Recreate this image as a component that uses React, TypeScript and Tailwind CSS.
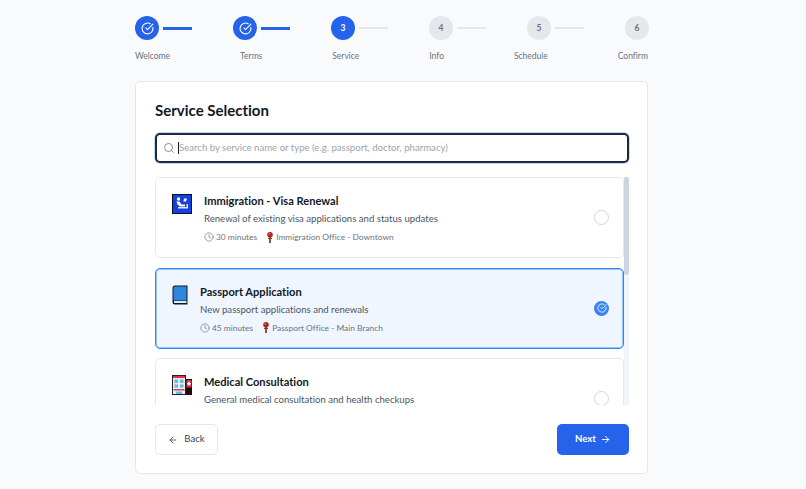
import React from 'react';
import { ArrowLeft, ArrowRight, CircleCheckBig, Clock, Search } from 'lucide-react';

const STEPS = ['Welcome', 'Terms', 'Service', 'Info', 'Schedule', 'Confirm'];
const CURRENT = 3;

function PinIcon() {
  return (
    <svg width="6" height="11" viewBox="0 0 6 11" className="flex-shrink-0">
      <rect x="2.2" y="4" width="1.6" height="7" fill="#6b2a22" />
      <rect x="1" y="6" width="4" height="1" fill="#8a3a2e" />
      <circle cx="3" cy="2.8" r="2.8" fill="#b3261e" />
      <circle cx="2.2" cy="2" r="0.7" fill="#e88a80" />
    </svg>
  );
}

function PassportControlIcon() {
  return (
    <svg width="20" height="20" viewBox="0 0 20 20" className="flex-shrink-0">
      <rect x="0.5" y="0.5" width="19" height="19" fill="#1440dd" stroke="#0b1020" />
      <circle cx="6.5" cy="5" r="1.7" fill="#fff" />
      <path d="M4.5 7.5 L7.5 7.5 L9.5 10.5 L13 10.5 L13 12.5 L8 12.5 L5.5 10.5 Z" fill="#fff" />
      <path d="M12 4.5 L15 4.5 L14 7.5 L11.5 7.5 Z" fill="#fff" />
      <path d="M6 14.5 L16 14.5 L16 10 L14.5 10 L14.5 13 L6 13 Z" fill="#dfe6ff" />
    </svg>
  );
}

function BookIcon() {
  return (
    <svg width="16" height="20" viewBox="0 0 16 20" className="flex-shrink-0">
      <path d="M3 .5 H15.5 V19.5 H3 Q.5 19.5 .5 17 V3 Q.5 .5 3 .5 Z" fill="#0f1a24" />
      <path d="M3 1.5 H14.5 V15.5 H1.5 V3 Q1.5 1.5 3 1.5 Z" fill="#2f86de" />
      <rect x="2" y="16" width="12.5" height="2" fill="#dcecf8" />
    </svg>
  );
}

function HospitalIcon() {
  return (
    <svg width="20" height="20" viewBox="0 0 20 20" className="flex-shrink-0">
      <rect x="0" y="0" width="14" height="20" fill="#20242c" />
      <rect x="1" y="1" width="12" height="18" fill="#f3e9ea" />
      <rect x="1" y="1" width="12" height="2" fill="#d8354a" />
      <rect x="2.5" y="4.5" width="3.5" height="3.5" fill="#5cbcea" />
      <rect x="8" y="4.5" width="3.5" height="3.5" fill="#5cbcea" />
      <rect x="2.5" y="9.5" width="3.5" height="3" fill="#5cbcea" />
      <rect x="8" y="9.5" width="3.5" height="3" fill="#5cbcea" />
      <rect x="1.5" y="14" width="11" height="1.5" fill="#c9485a" />
      <rect x="4" y="16.5" width="6" height="2.5" fill="#5cbcea" />
      <rect x="14" y="4" width="6" height="16" fill="#1c0b0e" />
      <rect x="14.5" y="5" width="5" height="7.5" fill="#d8354a" />
      <path d="M16.3 6.8 H17.7 V8 H18.9 V9.4 H17.7 V10.6 H16.3 V9.4 H15.1 V8 H16.3 Z" fill="#fff" />
    </svg>
  );
}

function Meta({ duration, place }: { duration: string; place: string }) {
  return (
    <div className="flex items-center text-[8.4px] leading-[14px] text-[#6b7280]">
      <Clock size={10} className="mr-[2px]" strokeWidth={1.6} />
      <span>{duration}</span>
      <span className="ml-[10px] mr-[3px]"><PinIcon /></span>
      <span>{place}</span>
    </div>
  );
}

function ServiceCard({ icon, title, desc, meta, selected }: {
  icon: React.ReactNode;
  title: string;
  desc: string;
  meta?: { duration: string; place: string };
  selected?: boolean;
}) {
  return (
    <div className={`flex justify-between h-[81px] flex-shrink-0 rounded-[5px] border pl-4 pr-[14px] ${selected ? 'bg-[#eff6ff] border-[#3b82f6] ring-1 ring-inset ring-[#93c5fd]' : 'bg-white border-[#e5e7eb]'}`}>
      <div className="flex items-start gap-3 pt-[15px]">
        <div className="pt-[1px]">{icon}</div>
        <div>
          <div className="text-[11.1px] leading-[16px] font-bold text-[#111827]">{title}</div>
          <div className="text-[9.6px] leading-[16px] mt-[2px] text-[#4b5563]">{desc}</div>
          {meta && <div className="mt-[3px]"><Meta {...meta} /></div>}
        </div>
      </div>
      <div className="self-center">
        {selected ? (
          <div className="w-[15px] h-[15px] rounded-full bg-[#3b82f6] flex items-center justify-center">
            <CircleCheckBig size={10} className="text-white" strokeWidth={2} />
          </div>
        ) : (
          <div className="w-[15px] h-[15px] rounded-full border-[1.5px] border-[#d1d5db]" />
        )}
      </div>
    </div>
  );
}

export default function App() {
  return (
    <div className="w-[806px] h-[489px] overflow-hidden bg-[#f9fafb] pt-4 pl-[135px] font-['Lato','Noto_Sans',sans-serif] [font-variant-ligatures:none]">
      <div className="w-[514px]">
        {/* Stepper */}
        <div className="flex items-center">
          {STEPS.map((step, i) => {
            const n = i + 1;
            const active = n <= CURRENT;
            return (
              <div key={step} className={`flex items-center ${n < STEPS.length ? 'w-[98px]' : 'w-6'}`}>
                <div className={`w-6 h-6 rounded-full flex items-center justify-center text-[8.5px] font-bold ${active ? 'bg-[#2563eb] text-white' : 'bg-[#e5e7eb] text-[#6b7280]'}`}>
                  {n < CURRENT ? <CircleCheckBig size={13} strokeWidth={2} /> : n}
                </div>
                {n < STEPS.length && (
                  <div className={`ml-1 w-[29px] ${n < CURRENT ? 'h-[3px] bg-[#2563eb]' : 'h-[2px] bg-[#e5e7eb]'}`} />
                )}
              </div>
            );
          })}
        </div>
        <div className="flex justify-between w-[513px] mt-[9px] text-[8.5px] leading-[14px] text-[#6b7280]">
          {STEPS.map(step => <span key={step}>{step}</span>)}
        </div>

        {/* Card */}
        <div className="w-[513px] h-[393px] mt-[18px] bg-white border border-[#e5e7eb] rounded-[5px] pl-[19px] pr-[18px] pt-[18px]">
          <h1 className="text-[15px] leading-[20px] font-bold text-[#111827]">Service Selection</h1>
          <div className="mt-[13px] h-[30px] flex items-center gap-[4px] pl-[6px] pr-2 rounded-[5px] bg-white border-2 border-[#1f2937] ring-1 ring-[#bfdbfe]">
            <Search size={12} className="text-[#6b7280] flex-shrink-0" strokeWidth={1.6} />
            <span className="w-px h-[12px] bg-[#111827] flex-shrink-0 -ml-[1px]" />
            <span className="text-[9.6px] text-[#9ca3af] -ml-[4px]">Search by service name or type (e.g. passport, doctor, pharmacy)</span>
          </div>

          <div className="flex mt-[14px] h-[228px] overflow-hidden">
            <div className="flex flex-col gap-[9.5px] w-[469px]">
              <ServiceCard
                icon={<PassportControlIcon />}
                title="Immigration - Visa Renewal"
                desc="Renewal of existing visa applications and status updates"
                meta={{ duration: '30 minutes', place: 'Immigration Office - Downtown' }}
              />
              <ServiceCard
                selected
                icon={<BookIcon />}
                title="Passport Application"
                desc="New passport applications and renewals"
                meta={{ duration: '45 minutes', place: 'Passport Office - Main Branch' }}
              />
              <ServiceCard
                icon={<HospitalIcon />}
                title="Medical Consultation"
                desc="General medical consultation and health checkups"
              />
            </div>
            <div className="w-[5px] bg-[#f1f5f9]">
              <div className="h-[98px] rounded-full bg-[#cbd5e1]" />
            </div>
          </div>

          <div className="flex justify-between mt-[19px]">
            <button className="h-[31px] w-[63px] flex items-center justify-center gap-[6px] bg-white border border-[#e5e7eb] rounded-[5px] text-[9.6px] text-[#374151]">
              <ArrowLeft size={10} /> Back
            </button>
            <button className="h-[31px] w-[72px] flex items-center justify-center gap-[4px] bg-[#2563eb] rounded-[5px] text-[9.6px] font-bold text-white">
              Next <ArrowRight size={11} />
            </button>
          </div>
        </div>
      </div>
    </div>
  );
}
